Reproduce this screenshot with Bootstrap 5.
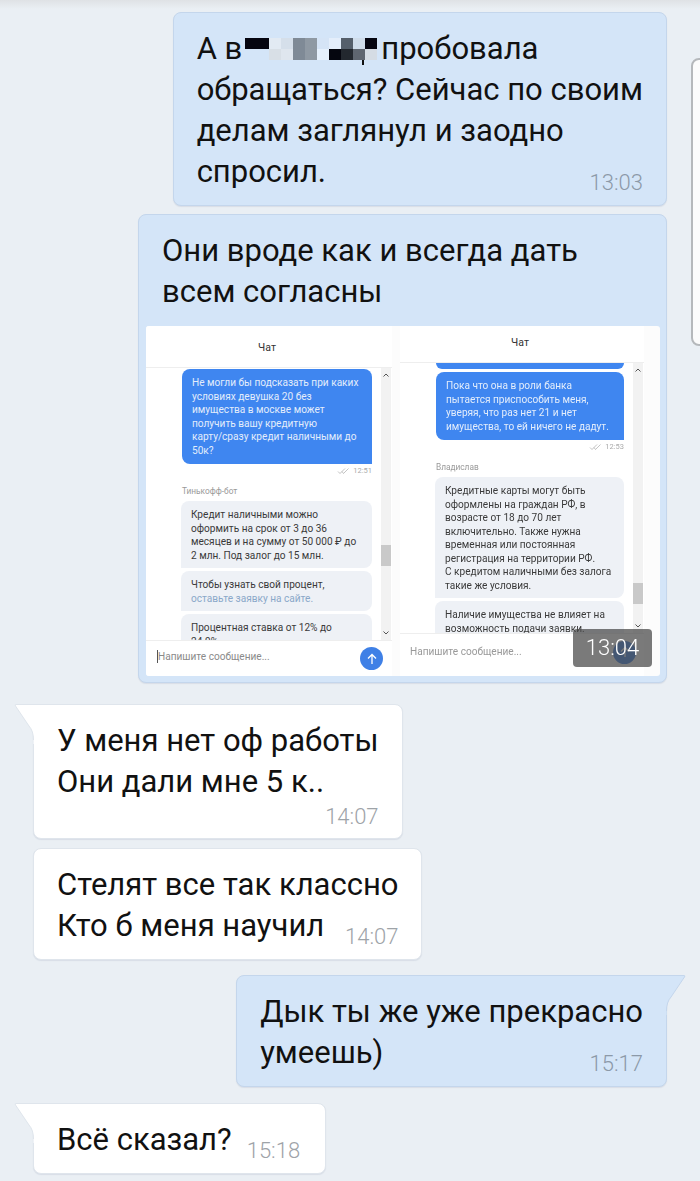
<!DOCTYPE html>
<html lang="ru">
<head>
    <meta charset="UTF-8">
    <title>Чат</title>
    <link rel="stylesheet" href="https://cdn.jsdelivr.net/npm/bootstrap@5.3.0/dist/css/bootstrap.min.css">
    <style>
        html, body { height: 100%; }
        body {
            position: relative;
            overflow: hidden;
            font-family: Roboto, "Liberation Sans", sans-serif;
            background: linear-gradient(#dfe2e5, #eaeff4 9px) #eaeff4;
        }
        .stream { padding: 12px 33px 0; }
        .bubble {
            position: relative;
            width: fit-content;
            padding: 15px 23px 13px;
            font-size: 31px;
            line-height: 41px;
            color: #111;
            border: 1px solid;
            border-radius: 8px;
            box-shadow: 0 1px 1px rgba(80, 100, 130, .12);
        }
        .mine { align-self: flex-end; background: #d4e5f8; border-color: #c4d6ec; }
        .theirs { align-self: flex-start; background: #fff; border-color: #dfe5ec; }
        .tail-left { border-top-left-radius: 0; }
        .tail-right { border-top-right-radius: 0; }
        .tail { position: absolute; top: -1px; }
        .tail-left .tail { left: -20px; }
        .tail-right .tail { right: -20px; }
        .stamp {
            font-size: 22px;
            line-height: 24px;
            font-weight: 300;
            color: #8c99a8;
            margin-bottom: -3px;
            margin-left: 15px;
        }
        .theirs .stamp { color: #9ea3a8; }
        .stamp-row { margin-top: 3px; margin-bottom: -1px; }
        .with-shot { padding-bottom: 6px; }
        .after-shot { margin-top: 21px; }
        .after-tailed { margin-top: 9px; }
        .before-mine { margin-top: 15px; }
        .before-last { margin-top: 16px; padding-right: 25px; }
        .mosaic {
            position: relative;
            display: inline-grid;
            grid-template-columns: repeat(11, 12px);
            grid-auto-rows: 11px;
            margin: 10px 4px 0 3px;
            vertical-align: top;
        }
        .mosaic-tick { position: absolute; left: 117px; top: 22px; width: 2px; height: 5px; background: #111; }
        .side-card {
            position: absolute;
            left: 691px;
            top: 58px;
            width: 30px;
            height: 288px;
            background: #fbfbfb;
            border: 2px solid #b5b8bb;
            border-radius: 8px;
        }
        .shot {
            position: relative;
            width: 514px;
            height: 350px;
            margin: 14px -17px 0 -16px;
            background: #fcfcfc;
            border-radius: 3px;
            overflow: hidden;
        }
        .shot-inner { height: 100%; filter: blur(.4px); font-size: 10.1px; line-height: 13.5px; color: #3a3a3a; }
        .pane { display: flex; flex-direction: column; background: #fff; }
        .pane-a { width: 246px; }
        .pane-b { width: 244px; margin-left: 8px; padding-bottom: 6px; }
        .pane-head { flex: none; padding-right: 4px; text-align: center; font-size: 10.5px; color: #333; border-bottom: 1px solid #eee; }
        .pane-a .pane-head { height: 42px; line-height: 44px; }
        .pane-b .pane-head { height: 37px; line-height: 34px; }
        .pane-scroll { flex: 1; min-height: 0; display: flex; }
        .pane-msgs { flex: 1; min-width: 0; padding: 1px 9px 0 36px; overflow: hidden; }
        .pane-b .pane-msgs { padding-top: 0; }
        .pane-bar {
            position: relative;
            flex: none;
            width: 10px;
            margin-right: 1px;
            background: #f2f2f2;
        }
        .pane-thumb { position: absolute; left: 0; right: 0; height: 21px; background: #c9c9c9; }
        .pane-a .pane-thumb { top: 177px; }
        .pane-b .pane-thumb { top: 220px; }
        .arrow { position: absolute; left: 2px; width: 6px; height: 4px; }
        .arrow-up { top: 5px; }
        .arrow-down { bottom: 5px; }
        .pane-foot { flex: none; display: flex; align-items: center; justify-content: space-between; height: 37px; padding: 0 8px 0 10px; color: #999; border-top: 1px solid #eee; }
        .pane-a .pane-foot { height: 36px; color: #8a8a8a; padding: 0 9px 0 11px; }
        .caret-mark { border-left: 1px solid #555; margin-bottom: 4px; }
        .send {
            display: flex;
            align-items: center;
            justify-content: center;
            width: 23px;
            height: 23px;
            border-radius: 50%;
            background: #3f80e6;
        }
        .out {
            padding: 7px 8px 7px 10px;
            color: #e3edfb;
            background: #3f86f0;
            border-radius: 8px 8px 0 8px;
            white-space: nowrap;
        }
        .out-stub { height: 6px; background: #3f86f0; border-radius: 0 0 8px 8px; margin-bottom: 3px; }
        .out-time { height: 14px; text-align: right; font-size: 7.5px; line-height: 14px; color: #aaa; }
        .sender { margin-top: 6px; height: 14px; line-height: 14px; font-size: 8.3px; color: #999; }
        .in { margin: 3px 0 0 -1px; padding: 7px 8px 6px 10px; background: #eef1f6; border-radius: 8px 8px 8px 0; white-space: nowrap; }
        .in a { color: #8aa8c9; text-decoration: none; }
        .stamp-over {
            position: absolute;
            left: 427px;
            top: 303px;
            width: 79px;
            height: 38px;
            font-size: 22px;
            font-weight: 300;
            line-height: 38px;
            text-align: center;
            color: #fff;
            background: rgba(70, 70, 70, .72);
            border-radius: 4px;
        }
    </style>
</head>
<body>
    <div class="side-card"></div>

    <div class="stream d-flex flex-column">
        <div class="bubble mine mb-2">
            А в<span class="mosaic" id="mosaic"><i class="mosaic-tick"></i></span>пробовала<br>
            обращаться? Сейчас по своим<br>
            делам заглянул и заодно
            <div class="d-flex justify-content-between align-items-end">
                <span>спросил.</span><span class="stamp">13:03</span>
            </div>
        </div>

        <div class="bubble mine with-shot">
            Они вроде как и всегда дать<br>
            всем согласны
            <div class="shot">
                <div class="shot-inner d-flex">
                    <div class="pane pane-a">
                        <div class="pane-head">Чат</div>
                        <div class="pane-scroll">
                            <div class="pane-msgs">
                                <div class="out">Не могли бы подсказать при каких<br>условиях девушка 20 без<br>имущества в москве может<br>получить вашу кредитную<br>карту/сразу кредит наличными до<br>50к?</div>
                                <div class="out-time">
                                    <svg width="14" height="6" viewBox="0 0 14 6" fill="none" stroke="#aaa" stroke-width=".7"><path d="M1 3.500 3 5.500 8 .5M5 3.500 6.500 5.500 11.500 .5"/></svg>
                                    12:51
                                </div>
                                <div class="sender">Тинькофф-бот</div>
                                <div class="in">Кредит наличными можно<br>оформить на срок от 3 до 36<br>месяцев и на сумму от 50 000 ₽ до<br>2 млн. Под залог до 15 млн.</div>
                                <div class="in">Чтобы узнать свой процент,<br><a href="#">оставьте заявку на сайте.</a></div>
                                <div class="in">Процентная ставка от 12% до<br>24.9%</div>
                            </div>
                            <div class="pane-bar">
                                <svg class="arrow arrow-up" viewBox="0 0 6 4" fill="none" stroke="#555" stroke-width="1"><path d="M.5 3.500 3 1 5.500 3.500"/></svg>
                                <div class="pane-thumb"></div>
                                <svg class="arrow arrow-down" viewBox="0 0 6 4" fill="none" stroke="#555" stroke-width="1"><path d="M.5 .5 3 3 5.500 .5"/></svg>
                            </div>
                        </div>
                        <div class="pane-foot">
                            <span class="caret-mark">Напишите сообщение...</span>
                            <span class="send">
                                <svg width="12" height="12" viewBox="0 0 12 12" fill="none" stroke="#fff" stroke-width="1.300"><path d="M6 11V1.500M2 5.500 6 1.500 10 5.500"/></svg>
                            </span>
                        </div>
                    </div>

                    <div class="pane pane-b">
                        <div class="pane-head">Чат</div>
                        <div class="pane-scroll">
                            <div class="pane-msgs">
                                <div class="out-stub"></div>
                                <div class="out">Пока что она в роли банка<br>пытается приспособить меня,<br>уверяя, что раз нет 21 и нет<br>имущества, то ей ничего не дадут.</div>
                                <div class="out-time">
                                    <svg width="14" height="6" viewBox="0 0 14 6" fill="none" stroke="#aaa" stroke-width=".7"><path d="M1 3.500 3 5.500 8 .5M5 3.500 6.500 5.500 11.500 .5"/></svg>
                                    12:53
                                </div>
                                <div class="sender">Владислав</div>
                                <div class="in">Кредитные карты могут быть<br>оформлены на граждан РФ, в<br>возрасте от 18 до 70 лет<br>включительно. Также нужна<br>временная или постоянная<br>регистрация на территории РФ.<br>С кредитом наличными без залога<br>такие же условия.</div>
                                <div class="in">Наличие имущества не влияет на<br>возможность подачи заявки.</div>
                            </div>
                            <div class="pane-bar">
                                <svg class="arrow arrow-up" viewBox="0 0 6 4" fill="none" stroke="#555" stroke-width="1"><path d="M.5 3.500 3 1 5.500 3.500"/></svg>
                                <div class="pane-thumb"></div>
                                <svg class="arrow arrow-down" viewBox="0 0 6 4" fill="none" stroke="#555" stroke-width="1"><path d="M.5 .5 3 3 5.500 .5"/></svg>
                            </div>
                        </div>
                        <div class="pane-foot">
                            <span>Напишите сообщение...</span>
                            <span class="send">
                                <svg width="12" height="12" viewBox="0 0 12 12" fill="none" stroke="#fff" stroke-width="1.300"><path d="M6 11V1.500M2 5.500 6 1.500 10 5.500"/></svg>
                            </span>
                        </div>
                    </div>
                </div>
                <div class="stamp-over">13:04</div>
            </div>
        </div>

        <div class="bubble theirs tail-left after-shot">
            <svg class="tail" width="20" height="40" viewBox="0 0 20 40"><path d="M20 .5H2Q.5 .5 1.500 2L15 22Q19.500 27 19.500 36V40H20Z" fill="#fff"/><path d="M20 .5H2Q.5 .5 1.500 2L15 22Q19.500 27 19.500 36" fill="none" stroke="#dfe5ec"/></svg>
            У меня нет оф работы<br>
            Они дали мне 5 к..
            <div class="stamp-row d-flex justify-content-end"><span class="stamp">14:07</span></div>
        </div>

        <div class="bubble theirs after-tailed">
            Стелят все так классно
            <div class="d-flex justify-content-between align-items-end">
                <span>Кто б меня научил</span><span class="stamp">14:07</span>
            </div>
        </div>

        <div class="bubble mine tail-right before-mine">
            <svg class="tail" width="20" height="40" viewBox="0 0 20 40"><path d="M0 .5H18Q19.500 .5 18.500 2L5 22Q.5 27 .5 36V40H0Z" fill="#d4e5f8"/><path d="M0 .5H18Q19.500 .5 18.500 2L5 22Q.5 27 .5 36" fill="none" stroke="#c4d6ec"/></svg>
            Дык ты же уже прекрасно
            <div class="d-flex justify-content-between align-items-end">
                <span>умеешь)</span><span class="stamp">15:17</span>
            </div>
        </div>

        <div class="bubble theirs tail-left before-last">
            <svg class="tail" width="20" height="40" viewBox="0 0 20 40"><path d="M20 .5H2Q.5 .5 1.500 2L15 22Q19.500 27 19.500 36V40H20Z" fill="#fff"/><path d="M20 .5H2Q.5 .5 1.500 2L15 22Q19.500 27 19.500 36" fill="none" stroke="#dfe5ec"/></svg>
            <div class="d-flex justify-content-between align-items-end">
                <span>Всё сказал?</span><span class="stamp">15:18</span>
            </div>
        </div>
    </div>

<script>
// цензура на скрине: цвета клеток мозаики, по строкам
const cells = [
    "#050510","#050510","#e2eaf3","#d5dfea","#7f8a96","#8f99a3","#d5e4f6","#e4eefb","#555f6b","#cfdcea","#050510",
    "#d4e5f8","#d4e5f8","#d8dfe6","#dfe6ee","#7f8a96","#8f99a3","#e6f1fd","#05060f","#23282f","#5f6670","#d5dce4"
];
const mosaic = document.getElementById("mosaic");
cells.forEach(color => {
    const cell = document.createElement("span");
    cell.style.background = color;
    mosaic.appendChild(cell);
});
</script>
<script src="https://cdn.jsdelivr.net/npm/bootstrap@5.3.0/dist/js/bootstrap.bundle.min.js"></script>
</body>
</html>
